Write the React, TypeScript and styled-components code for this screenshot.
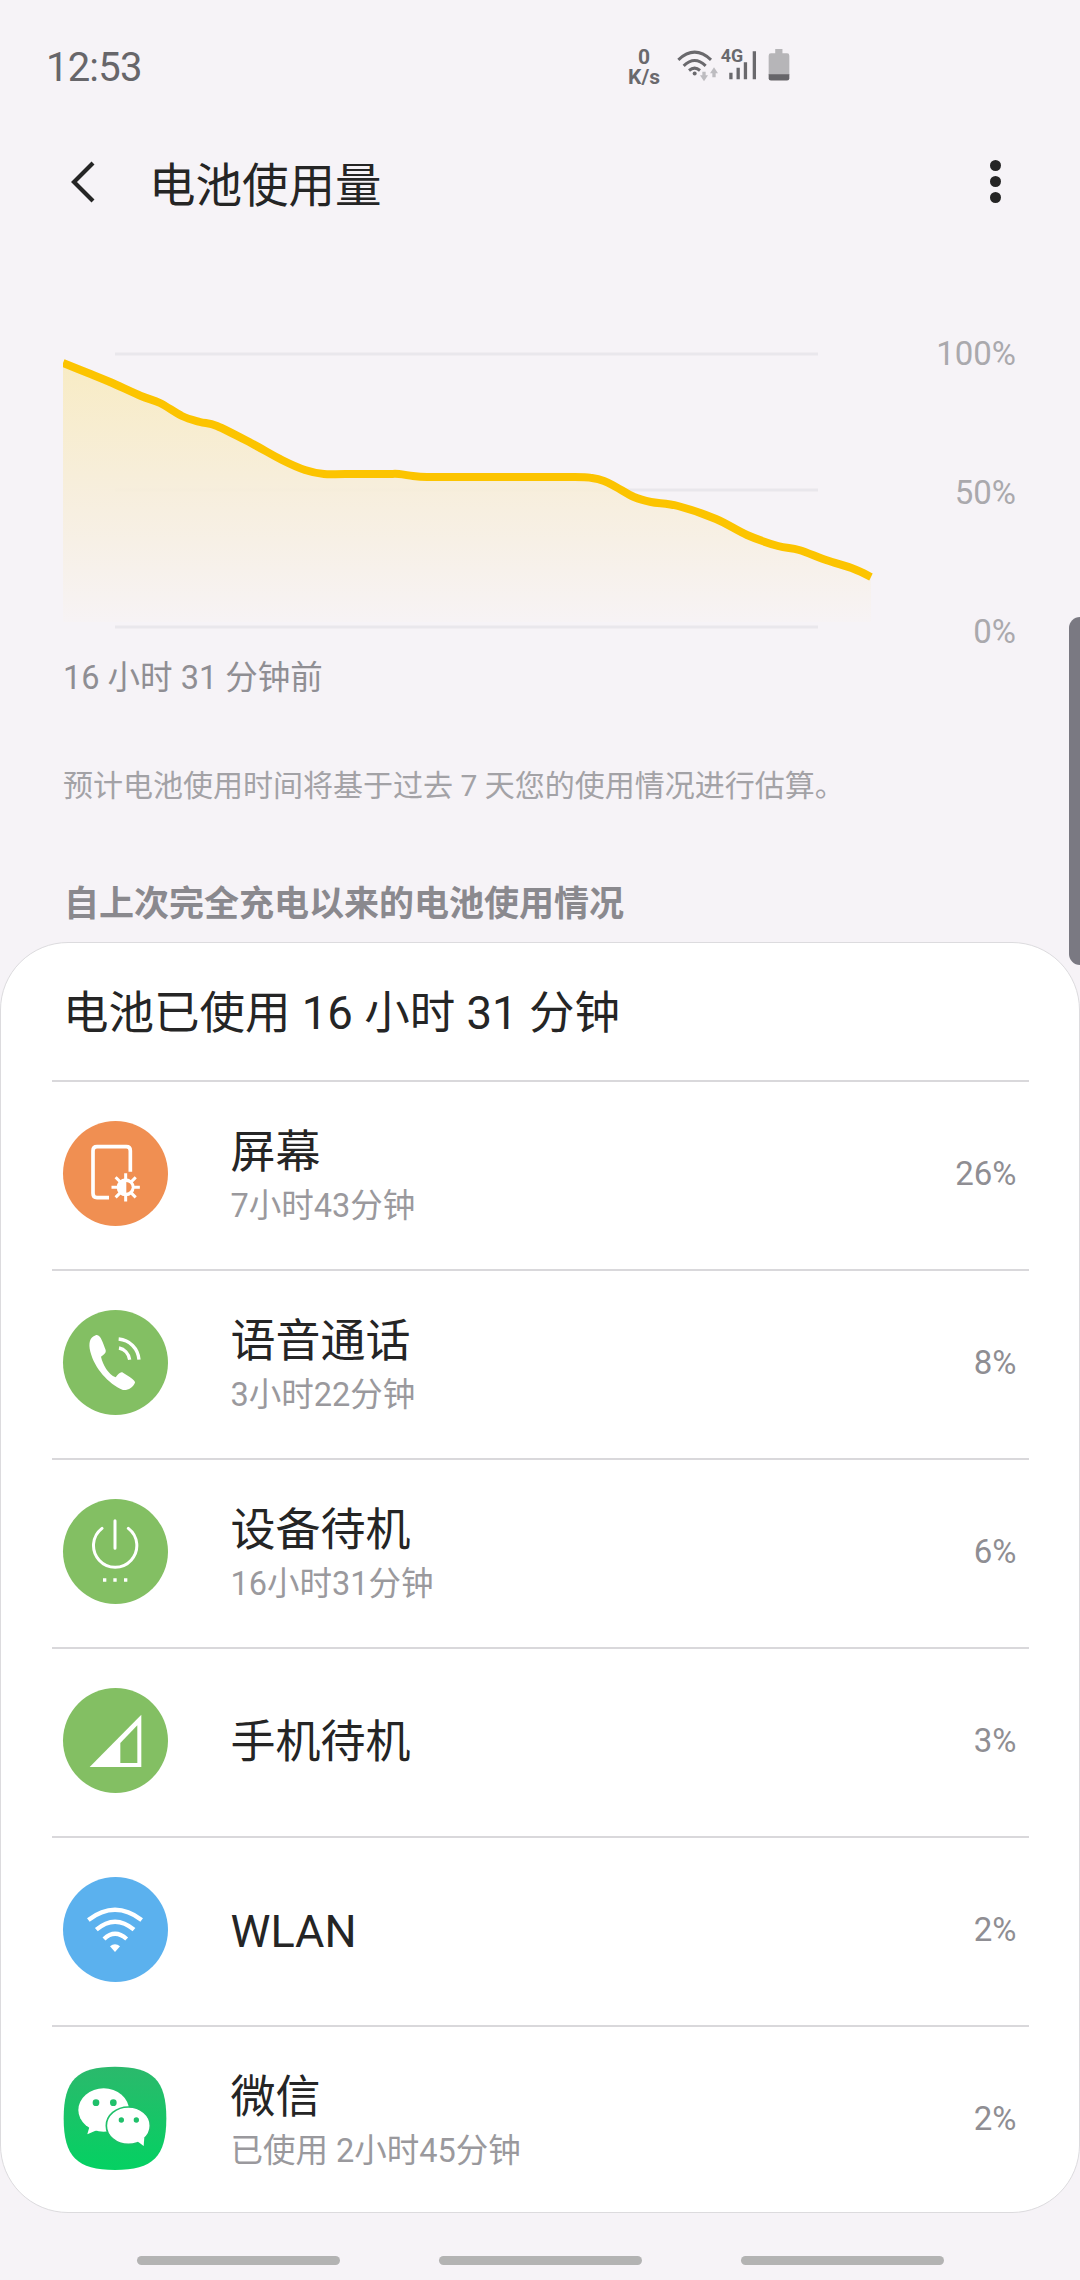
import React from 'react';
import styled, { createGlobalStyle } from 'styled-components';

const FONT = `Roboto, "Noto Sans CJK SC", sans-serif`;

const GlobalStyle = createGlobalStyle`
  html, body {
    margin: 0;
    padding: 0;
    background: #f6f3f7;
  }
  * {
    box-sizing: border-box;
  }
`;

// battery curve, in page pixels
const CURVE = [
  [63, 363], [88, 373], [110, 382], [141, 396], [160, 403], [182, 416], [200, 422], [217, 426], [251, 443], [282, 460],
  [305, 470], [324, 474], [345, 474], [385, 474], [399, 474], [413, 476], [427, 477], [445, 477], [500, 477], [575, 477],
  [592, 478], [604, 481], [616, 487], [634, 497], [651, 502], [678, 506],
  [716, 519], [747, 535], [778, 546], [799, 550], [826, 560], [854, 569], [871, 577],
];

// catmull-rom through the points
const smoothPath = (pts: number[][]) => {
  let d = `M${pts[0][0]} ${pts[0][1]}`;
  for (let i = 0; i < pts.length - 1; i++) {
    const p0 = pts[Math.max(i - 1, 0)];
    const p1 = pts[i];
    const p2 = pts[i + 1];
    const p3 = pts[Math.min(i + 2, pts.length - 1)];
    const c1x = p1[0] + (p2[0] - p0[0]) / 6;
    const c1y = p1[1] + (p2[1] - p0[1]) / 6;
    const c2x = p2[0] - (p3[0] - p1[0]) / 6;
    const c2y = p2[1] - (p3[1] - p1[1]) / 6;
    d += ` C${c1x} ${c1y} ${c2x} ${c2y} ${p2[0]} ${p2[1]}`;
  }
  return d;
};

const ScreenIcon = () => (
  <svg viewBox="70 63 315 315" width="105" height="105">
    <path d="M272 215 V152 Q272 140 260 140 H172 Q160 140 160 152 V280 Q160 293 172 293 H208" fill="none" stroke="#fff" strokeWidth="11" />
    <g stroke="#fff" strokeWidth="9" strokeLinecap="square">
      <path d="M258 224 V300 M220 262 H296 M231 235 L285 289 M285 235 L231 289" />
    </g>
    <circle cx="258" cy="262" r="27" fill="#fff" />
    <path d="M260 246 A16 16 0 0 1 260 278 Z" fill="#f08f52" />
  </svg>
);

const CallIcon = () => (
  <svg viewBox="70 60 315 315" width="105" height="105">
    <path
      d="M168 136 C150 142 146 160 152 185 C165 235 205 280 250 300 C265 302 280 292 286 278 C286 272 282 268 250 248 C242 244 236 252 228 262 C205 252 190 225 184 200 C192 194 200 190 198 180 C190 160 182 130 168 136 Z"
      fill="#fff"
    />
    <path d="M237 147 C270 150 295 175 298 209 M238 174 C254 177 267 190 270 209" fill="none" stroke="#fff" strokeWidth="10" />
  </svg>
);

const PowerIcon = () => (
  <svg viewBox="70 57 315 315" width="105" height="105">
    <path d="M187 145 A65 65 0 1 0 266 145 M226 122 V205" fill="none" stroke="#fff" strokeWidth="9" strokeLinecap="round" />
    <path d="M190 295 h10 v10 h-10 Z M221 295 h10 v10 h-10 Z M253 295 h10 v10 h-10 Z" fill="#fff" />
  </svg>
);

const SignalIcon = () => (
  <svg viewBox="70 53 315 315" width="105" height="105">
    <path d="M150 290 H305 V133 Z" fill="#fff" />
    <path d="M242 278 H293 V165 L242 218 Z" fill="#83bf63" />
  </svg>
);

const WifiIcon = () => (
  <svg viewBox="70 50 315 315" width="105" height="105">
    <path d="M146 179 Q226 118 306 179 M170 208 Q226 160 283 208 M193 236 Q226 205 261 236" fill="none" stroke="#fff" strokeWidth="13" />
    <path d="M211 258 Q226 245 241 258 L226 275 Z" fill="#fff" />
  </svg>
);

const WechatIcon = () => (
  <svg viewBox="70 78 315 315" width="105" height="105">
    <defs>
      <linearGradient id="wechatBg" x1="0" y1="0" x2="0" y2="1">
        <stop offset="0" stopColor="#2bb96c" />
        <stop offset="1" stopColor="#04d162" />
      </linearGradient>
    </defs>
    <path d="M226 80 C340 80 380 120 380 235 C380 350 340 390 226 390 C112 390 72 350 72 235 C72 120 112 80 226 80 Z" fill="url(#wechatBg)" />
    <ellipse cx="192" cy="210" rx="76" ry="65" fill="#fff" />
    <path d="M150 258 L143 283 L178 268 Z" fill="#fff" />
    <ellipse cx="266" cy="257" rx="66" ry="56" fill="#fff" stroke="#1fc06a" strokeWidth="5" />
    <path d="M292 303 L312 318 L314 292 Z" fill="#fff" />
    <circle cx="169" cy="188" r="10" fill="#1fc06a" />
    <circle cx="221" cy="188" r="10" fill="#1fc06a" />
    <circle cx="245" cy="240" r="8" fill="#1fc06a" />
    <circle cx="290" cy="240" r="8" fill="#1fc06a" />
  </svg>
);

const USAGE = [
  { name: '屏幕', time: '7小时43分钟', pct: '26%', color: '#f08f52', Icon: ScreenIcon },
  { name: '语音通话', time: '3小时22分钟', pct: '8%', color: '#83bf63', Icon: CallIcon },
  { name: '设备待机', time: '16小时31分钟', pct: '6%', color: '#83bf63', Icon: PowerIcon },
  { name: '手机待机', pct: '3%', color: '#83bf63', Icon: SignalIcon },
  { name: 'WLAN', pct: '2%', color: '#5bb1ee', Icon: WifiIcon },
  { name: '微信', time: '已使用 2小时45分钟', pct: '2%', Icon: WechatIcon },
];

const App = () => {
  const line = smoothPath(CURVE);
  return (
    <Page>
      <GlobalStyle />
      <StatusBar>
        <Clock>12:53</Clock>
        <StatusIcons>
          <NetSpeed>
            <span>0</span>
            <span>K/s</span>
          </NetSpeed>
          <svg viewBox="225 45 135 110" width="45" height="37">
            <path d="M235 86 Q284 40 333 86 M251 104 Q284 72 317 104 M267 118 Q284 104 300 118" fill="none" stroke="#6a696d" strokeWidth="9" />
            <circle cx="284" cy="127" r="6" fill="#6a696d" />
            <path d="M312 150 L300 132 H307 V122 H317 V132 H324 Z M342 108 L354 126 H347 V138 H337 V126 H330 Z" fill="#bdbcc0" />
          </svg>
          <SignalBars viewBox="360 40 115 115" width="38" height="38">
            <text x="362" y="97" fontFamily="Roboto, sans-serif" fontWeight="700" fontSize="54" fill="#6a696d">4G</text>
            <path d="M388 130 h10 v20 h-10 Z M410 115 h10 v35 h-10 Z M432 98 h10 v52 h-10 Z M459 65 h10 v85 h-10 Z" fill="#6a696d" />
          </SignalBars>
          <BatteryIcon viewBox="505 55 67 100" width="22" height="33">
            <path d="M527 58 h22 v13 h14 q7 0 7 7 v59 h-63 v-59 q0 -7 7 -7 h13 Z" fill="#b6b5b8" />
            <path d="M507 135 h63 v12 q0 7 -7 7 h-49 q-7 0 -7 -7 Z" fill="#666569" />
          </BatteryIcon>
        </StatusIcons>
      </StatusBar>

      <Toolbar>
        <BackIcon width="30" height="44" viewBox="0 0 30 44">
          <path d="M25 3 L6 22 L25 41" fill="none" stroke="#252525" strokeWidth="4.2" />
        </BackIcon>
        <Title>电池使用量</Title>
        <MoreButton>
          <i />
          <i />
          <i />
        </MoreButton>
      </Toolbar>

      <ChartRow>
        <svg viewBox="63 340 820 300" width="820" height="300">
          <defs>
            <linearGradient id="fade" gradientUnits="userSpaceOnUse" x1="0" y1="363" x2="0" y2="625">
              <stop offset="0" stopColor="#f8ebc0" />
              <stop offset="0.5" stopColor="#f7eedb" />
              <stop offset="1" stopColor="#f7f3f5" />
            </linearGradient>
          </defs>
          {[354, 490, 627].map((y) => (
            <rect key={y} x="115" y={y - 1.5} width="703" height="3" fill="#e9e7ec" />
          ))}
          <path d={`${line} V622 H63 Z`} fill="url(#fade)" fillOpacity="0.92" />
          <path d={line} fill="none" stroke="#fcc400" strokeWidth="8" strokeLinejoin="round" />
        </svg>
        <AxisLabels>
          <span>100%</span>
          <span>50%</span>
          <span>0%</span>
        </AxisLabels>
      </ChartRow>

      <Caption>16 小时 31 分钟前</Caption>
      <Note>预计电池使用时间将基于过去 7 天您的使用情况进行估算。</Note>
      <SectionTitle>自上次完全充电以来的电池使用情况</SectionTitle>

      <Card>
        <CardTitle>电池已使用 16 小时 31 分钟</CardTitle>
        {USAGE.map(({ name, time, pct, color, Icon }) => (
          <Row key={name}>
            <IconBadge $color={color}>
              <Icon />
            </IconBadge>
            <RowText>
              <RowName>{name}</RowName>
              {time && <RowTime>{time}</RowTime>}
            </RowText>
            <Percent>{pct}</Percent>
          </Row>
        ))}
      </Card>

      <NavBar>
        <NavPill />
        <NavPill />
        <NavPill />
      </NavBar>

      <ScrollHandle />
    </Page>
  );
};

const Page = styled.div`
  position: relative;
  width: 1080px;
  height: 2280px;
  overflow: hidden;
  background: #f6f3f7;
  font-family: ${FONT};
  display: flex;
  flex-direction: column;
`;

const StatusBar = styled.div`
  height: 134px;
  padding: 0 290px 0 46px;
  display: flex;
  align-items: center;
  justify-content: space-between;
`;

const Clock = styled.span`
  font-size: 40px;
  letter-spacing: -0.8px;
  color: #67666a;
`;

const StatusIcons = styled.div`
  margin-bottom: 5px;
  display: flex;
  align-items: center;
`;

const NetSpeed = styled.div`
  width: 34px;
  margin: 5px 14px 0 0;
  display: flex;
  flex-direction: column;
  align-items: center;
  font-size: 21px;
  line-height: 20px;
  font-weight: 700;
  color: #6a696d;
`;

const SignalBars = styled.svg`
  margin-top: -5px;
`;

const BatteryIcon = styled.svg`
  margin-left: 10px;
`;

const Toolbar = styled.div`
  height: 94px;
  padding: 0 79px 0 68px;
  display: flex;
  align-items: center;
  gap: 51px;
`;

const BackIcon = styled.svg`
  margin-top: 2px;
`;

const Title = styled.h1`
  margin: 0;
  flex: 1;
  font-size: 46.5px;
  font-weight: 400;
  color: #252525;
`;

const MoreButton = styled.div`
  display: flex;
  flex-direction: column;
  gap: 5px;

  i {
    display: block;
    width: 11px;
    height: 11px;
    border-radius: 50%;
    background: #252525;
  }
`;

const ChartRow = styled.div`
  margin-top: 112px;
  height: 300px;
  padding: 0 64px 0 63px;
  display: flex;
`;

const AxisLabels = styled.div`
  flex: 1;
  height: 304px;
  margin-top: 1px;
  display: flex;
  flex-direction: column;
  justify-content: space-between;
  align-items: flex-end;
  font-size: 33px;
  line-height: 26px;
  color: #aaa9ad;
`;

const Caption = styled.div`
  margin-top: 17px;
  padding-left: 63px;
  font-size: 32.5px;
  line-height: 42px;
  color: #8f8e93;
`;

const Note = styled.div`
  margin-top: 66px;
  padding-left: 63px;
  font-size: 30px;
  line-height: 42px;
  color: #a3a2a6;
`;

const SectionTitle = styled.h2`
  margin: 77px 0 0;
  padding-left: 64px;
  font-size: 35px;
  line-height: 42px;
  font-weight: 700;
  color: #8a898e;
`;

const Card = styled.section`
  margin-top: 16px;
  height: 1271px;
  background: #fff;
  border: 1.5px solid #dcdbde;
  border-radius: 68px;
  overflow: hidden;
`;

const CardTitle = styled.div`
  height: 137px;
  padding: 0 0 5px 62px;
  display: flex;
  align-items: center;
  font-size: 45.5px;
  color: #252525;
`;

const Row = styled.div`
  height: 189px;
  margin: 0 50.5px;
  padding: 0 12px 0 11px;
  border-top: 2px solid #d9d8db;
  display: flex;
  align-items: center;
`;

const IconBadge = styled.div<{ $color?: string }>`
  flex: none;
  width: 105px;
  height: 105px;
  margin-bottom: 4px;
  border-radius: 50%;
  background: ${(p) => p.$color || 'transparent'};
  display: flex;
`;

const RowText = styled.div`
  margin-left: 63px;
  flex: 1;
  display: flex;
  flex-direction: column;
`;

const RowName = styled.div`
  font-size: 45px;
  line-height: 60px;
  color: #252525;
`;

const RowTime = styled.div`
  font-size: 32.5px;
  line-height: 46px;
  color: #9a999d;
`;

const Percent = styled.div`
  margin-bottom: 4px;
  font-size: 33px;
  color: #8f8e93;
`;

const NavBar = styled.div`
  margin-top: 43px;
  display: flex;
  justify-content: center;
  gap: 99px;
`;

const NavPill = styled.div`
  width: 203px;
  height: 9px;
  border-radius: 5px;
  background: #b3b3b3;
`;

const ScrollHandle = styled.div`
  position: absolute;
  top: 617px;
  right: 0;
  width: 11px;
  height: 348px;
  background: #7a7982;
  border-radius: 12px 0 0 12px;
`;

export default App;
